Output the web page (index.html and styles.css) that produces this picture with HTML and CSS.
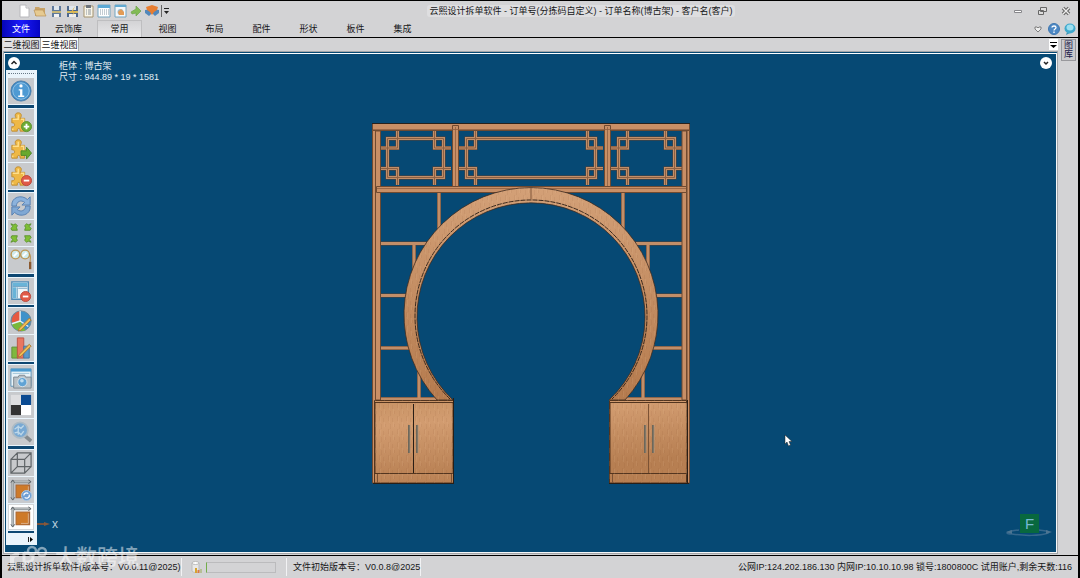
FILE: index.html
```html
<!DOCTYPE html>
<html lang="zh-CN">
<head>
<meta charset="utf-8">
<title>云熙设计拆单软件</title>
<link rel="stylesheet" href="styles.css">
</head>
<body>
<div class="app">
  <header class="header">
    <div class="titlebar">
      <div class="quick">
        <button aria-label="新建"><svg viewBox="0 0 14 14"><path d="M3 1h6l3 3v9H3z" fill="#fff" stroke="#b8b8bc"/><path d="M9 1v3h3" fill="#eee" stroke="#b8b8bc"/></svg></button>
        <button aria-label="打开"><svg viewBox="0 0 14 14"><path d="M2 3h4l1 1h5v8H2z" fill="#c9a367"/><path d="M1 6h9l3 6H3z" fill="#e6ca91" stroke="#b99459" stroke-width=".7"/></svg></button>
        <button aria-label="保存"><svg viewBox="0 0 14 14"><path d="M3 2h9v11H3z" fill="#607b9d"/><path d="M5 2h5v4H5z" fill="#dfe6ec"/><path d="M3 7h9v2H3z" fill="#c7b779"/><path d="M5 10h5v3H5z" fill="#f3f3f3"/></svg></button>
        <button aria-label="另存为"><svg viewBox="0 0 14 14"><path d="M2 2h11v11H2z" fill="#4d688d"/><path d="M4 2h7v4H4z" fill="#dfe6ec"/><path d="M2 7h11v2H2z" fill="#d3bc62"/><path d="M4 10h7v3H4z" fill="#eee"/><path d="M10 2L6 8h3l-2 4 4-5H8z" fill="#e4b64a"/></svg></button>
        <button aria-label="清单"><svg viewBox="0 0 14 14"><path d="M3 2h9v11H3z" fill="#f8f5e9" stroke="#a5936f"/><path d="M5 1h5v3H5z" fill="#6d747c"/><path d="M5 6h1m1 0h3M5 8h1m1 0h3M5 10h1m1 0h3" stroke="#8b949c"/></svg></button>
        <button aria-label="表格"><svg viewBox="0 0 14 14"><path d="M1 1h12v12H1z" fill="#fff" stroke="#75a4bf"/><path d="M1 1h12v3H1z" fill="#5ca9d5"/><path d="M3 6h9M3 8h9M3 10h9" stroke="#879aa8" stroke-dasharray="1 1"/></svg></button>
        <button aria-label="视图设置"><svg viewBox="0 0 14 14"><path d="M2 1h11v12H2z" fill="#f5f8fa" stroke="#75a4bf"/><path d="M2 1h11v2H2z" fill="#62aad2"/><circle cx="7.500" cy="8" r="3" fill="#9db9cb"/><path d="M5 8l3-3 3 3v3H6z" fill="#e39b55"/></svg></button>
        <button aria-label="转到"><svg viewBox="0 0 14 14"><path d="M2 8l5-3V2l5 5-5 5V9l-4 1z" fill="#82bb55" stroke="#6ca348" stroke-width=".7"/></svg></button>
        <button aria-label="导入模型"><svg viewBox="0 0 14 14"><path d="M0 6l7-1 7 1v3l-4 3-3-3-3 3-4-3z" fill="#5288bb"/><path d="M1 3l6-2 6 2-1 3-3 2-2 3-2-3-3-2z" fill="#e77d31"/></svg></button>
        <button class="more" aria-label="更多"><svg viewBox="0 0 8 14"><path d="M0.500 1v12" stroke="#666"/><path d="M3 4.500h5" stroke="#222"/><path d="M3 7h5L5.500 10z" fill="#222"/></svg></button>
      </div>
      <h1 class="title">云熙设计拆单软件 - 订单号(分拣码自定义) - 订单名称(博古架) - 客户名(客户)</h1>
      <div class="window-controls">
        <button aria-label="最小化"><svg viewBox="0 0 10 10"><path d="M1.500 4.500h7v2h-7z" fill="#fff" stroke="#87878b"/></svg></button>
        <button aria-label="还原"><svg viewBox="0 0 10 10"><path d="M3.500 1.500h6v4h-6zM1.500 4.500h5v4h-5z" fill="#ddd" stroke="#666"/></svg></button>
        <button aria-label="关闭"><svg viewBox="0 0 10 10"><path d="M2 2l6 6M8 2l-6 6" stroke="#666" stroke-width="3.500"/><path d="M2 2l6 6M8 2l-6 6" stroke="#eee" stroke-width="1.300"/></svg></button>
      </div>
    </div>
    <nav class="ribbon">
      <button class="file">文件</button>
      <button class="wide">云饰库</button>
      <button class="active">常用</button>
      <button>视图</button>
      <button>布局</button>
      <button>配件</button>
      <button>形状</button>
      <button>板件</button>
      <button>集成</button>
      <div class="help">
        <button aria-label="折叠功能区"><svg viewBox="0 0 12 12"><path d="M3 4h2l1 1 1-1h2v2L6 9 3 6z" fill="#eee" stroke="#666" stroke-width=".8"/></svg></button>
        <button aria-label="帮助"><svg viewBox="0 0 12 12"><circle cx="6" cy="6" r="5.500" fill="#4d88c4" stroke="#3f77b0"/><path d="M4 4.500C4 2.500 8 2.500 8 4.500 8 6 6 6 6 7.500M6 8.500V10" fill="none" stroke="#fff" stroke-width="1.300"/></svg></button>
        <button aria-label="在线客服"><svg viewBox="0 0 12 12"><path d="M3 9l-1 3 4-2z" fill="#3c93b4"/><ellipse cx="6" cy="5.500" rx="5.500" ry="5" fill="#3fa9cd"/><ellipse cx="6" cy="4.500" rx="3.500" ry="3" fill="#9ddff0"/></svg></button>
      </div>
    </nav>
  </header>

  <main class="workspace">
    <section class="document">
      <div class="doc-tabs">
        <button>二维视图</button>
        <button class="selected">三维视图</button>
        <button class="tab-menu" aria-label="视图列表"><svg viewBox="0 0 9 10"><path d="M1 2h7v1H1zM1 5h7L4.500 8z"/></svg></button>
      </div>
      <div class="viewport">
        <button class="round round-left" aria-label="收起"><svg viewBox="0 0 12 12"><circle cx="6" cy="6" r="6" fill="#fff"/><path d="M3.500 7L6 4.500 8.500 7" fill="none" stroke="#222" stroke-width="1.500"/></svg></button>
        <button class="round round-right" aria-label="展开"><svg viewBox="0 0 12 12"><circle cx="6" cy="6" r="6" fill="#fff"/><path d="M4 5l2 2 2-2" fill="none" stroke="#222" stroke-width="1.500"/></svg></button>

        <svg class="defs" aria-hidden="true">
          <symbol id="puzzle" viewBox="0 0 24 24"><path d="M2 8h5c-2-2-2-6 2-6s4 4 2 6h5v5c4-2 5 0 5 2s-2 4-5 2v5h-5c1-4-4-4-3 0H2v-5c4 1 4-5 0-4z" fill="#eeb846" stroke="#bd8a2e"/><path d="M3 9h6V4M12 9h3v6M3 19v2" stroke="#ffdf8b" stroke-width="1.500" fill="none"/></symbol>
          <symbol id="frame" viewBox="0 0 24 24"><path d="M3 22V3h19" fill="none" stroke="#8d9295" stroke-width="3"/><path d="M3 22V3h19" fill="none" stroke="#c4c9cb"/><path d="M1 4l2-3 2 3M20 1l3 2-3 2M1 20l2 3 2-3" fill="none" stroke="#555c60"/><path d="M6 6h16v15H6z" fill="#a5663a"/><path d="M7 7h13v13H7z" fill="#ce7a29"/><path d="M20 8v11H12" fill="none" stroke="#deb48c"/></symbol>
        </svg>

        <div class="toolbar" role="toolbar" aria-label="视图工具">
          <div class="grip"></div>
          <button aria-label="信息"><svg viewBox="0 0 24 24"><circle cx="12" cy="12" r="11" fill="#3987c5" stroke="#4d7ea8"/><circle cx="12" cy="12" r="9" fill="#4e9ad3" stroke="#9cc8e7"/><circle cx="12" cy="6.500" r="1.800" fill="#fff"/><path d="M9.500 10h4v7h2v1.500H9V17h2v-5.500H9.500z" fill="#fff"/></svg></button>
          <hr class="thick">
          <button aria-label="添加组件"><svg viewBox="0 0 24 24"><use href="#puzzle"/><circle cx="18" cy="17" r="5.500" fill="#6cab32" stroke="#5d9330"/><path d="M18 14v6m-3-3h6" stroke="#fff" stroke-width="2"/></svg></button>
          <button aria-label="导出组件"><svg viewBox="0 0 24 24"><use href="#puzzle"/><path d="M12 14h6v-4l5.500 6.500L18 23v-4h-6z" fill="#68a92d" stroke="#4f872a"/></svg></button>
          <button aria-label="删除组件"><svg viewBox="0 0 24 24"><use href="#puzzle"/><circle cx="18" cy="17" r="5.500" fill="#e05a48" stroke="#b9463a"/><path d="M15 17h6" stroke="#fff" stroke-width="2"/></svg></button>
          <hr>
          <button aria-label="刷新"><svg viewBox="0 0 24 24"><path d="M2 12C1 2 13-1 19 5l3-3v9h-9l3-3C12 5 7 7 7 12z" fill="#8bb2dc" stroke="#557fb0"/><path d="M22 12c1 10-11 13-17 7l-3 3v-9h9l-3 3c4 3 9 1 9-4z" fill="#7fa8d4" stroke="#557fb0"/></svg></button>
          <button aria-label="缩放至全部"><svg viewBox="0 0 24 24"><path id="corner" d="M1 2l3 1 2-1 2 2-1 2 1 3H2L1 7l2-2z" fill="#80bf36" stroke="#5b932e"/><use href="#corner" transform="matrix(-1 0 0 1 24 0)"/><use href="#corner" transform="matrix(1 0 0 -1 0 24)"/><use href="#corner" transform="matrix(-1 0 0 -1 24 24)"/></svg></button>
          <button aria-label="查看"><svg viewBox="0 0 24 24"><circle cx="6" cy="6" r="4.800" fill="#cfebed" stroke="#bb9653" stroke-width="1.500"/><circle cx="16.500" cy="6" r="4.800" fill="#cfebed" stroke="#bb9653" stroke-width="1.500"/><path d="M21 5c2 2 1 5 1 9" fill="none" stroke="#b78739"/><path d="M22 14v8" stroke="#8b5930" stroke-width="2.500"/><path d="M4 8l4-4m6 4l4-4" stroke="#fff" stroke-width="2"/></svg></button>
          <hr class="thick">
          <button aria-label="关闭视窗"><svg viewBox="0 0 24 24"><path d="M2 2h18v19H2z" fill="#edf6fa" stroke="#4f8bb5" stroke-width="1.500"/><path d="M3 3h16v4H3zM3 8h4v12H3z" fill="#69b4d8"/><path d="M3 7h16M8 8v12M9 9h10" stroke="#6fa0bf"/><circle cx="17" cy="18" r="5.500" fill="#e05a48" stroke="#b9463a"/><path d="M14 18h6" stroke="#fff" stroke-width="2"/></svg></button>
          <hr>
          <button aria-label="颜色"><svg viewBox="0 0 24 24"><circle cx="12" cy="12" r="11" fill="#3e92ca" stroke="#698698"/><path d="M11 12V1A11 11 0 0 0 2 14z" fill="#e65a42"/><path d="M11 12L2 15a11 11 0 0 0 15 7z" fill="#79b83b"/><path d="M11 1v11l9 6m-9-6L2 15" fill="none" stroke="#e9f2f4" stroke-width="1.500"/><path d="M21 9l2 2L12 22l-3 1 1-3z" fill="#efbd55" stroke="#a97632"/></svg></button>
          <button aria-label="统计"><svg viewBox="0 0 24 24"><path d="M2 11h7v12H2z" fill="#7fb83e" stroke="#5e9038"/><path d="M8 1h7v22H8z" fill="#e87660" stroke="#bc5142"/><path d="M15 10h6v13h-6z" fill="#5b99cb" stroke="#3f75a1"/><path d="M21 8l2 2-11 11-3 1 1-3z" fill="#efbd55" stroke="#a97632"/></svg></button>
          <hr>
          <button aria-label="截图"><svg viewBox="0 0 24 24"><path d="M1 2h22v19H1z" fill="#e8f3f8" stroke="#5b93b8"/><path d="M1 2h22v3H1z" fill="#4b9bd0"/><path d="M3 7h18" stroke="#9dc4d8"/><path d="M4 11h5l1-2h6l1 2h6v12H4z" fill="#b8c0c5" stroke="#7b868d"/><circle cx="13.500" cy="16.500" r="5" fill="#60a3d5" stroke="#d9e4ea"/><circle cx="13" cy="15" r="2" fill="#bcdcf0"/></svg></button>
          <button aria-label="显示模式"><svg viewBox="0 0 24 24"><path d="M1 1h11v11H1z" fill="#dedee0"/><path d="M12 1h11v11H12z" fill="#0b4b92"/><path d="M1 12h11v11H1z" fill="#333"/><path d="M12 12h11v11H12z" fill="#fff"/></svg></button>
          <button aria-label="放大镜"><svg viewBox="0 0 24 24"><path d="M15 15l8 7" stroke="#858b8f" stroke-width="4"/><circle cx="11" cy="10" r="8.500" fill="#79a9d3" stroke="#adbbc5" stroke-width="2"/><path d="M5 9l4-3 3 2 3-3M5 13l4-1 3 3 3-4M9 5v10" fill="none" stroke="#bdd7e9" stroke-width="1.500"/></svg></button>
          <hr class="thick">
          <button aria-label="线框"><svg viewBox="0 0 24 24"><path d="M1 8h15v15H1zM8 1h15v15H8zM1 8l7-7m8 7l7-7m-7 22l7-7M1 23l7-7" fill="none" stroke="#5f6467" stroke-width="1.300"/></svg></button>
          <button aria-label="尺寸刷新"><svg viewBox="0 0 24 24"><use href="#frame"/><circle cx="18" cy="18" r="5.500" fill="#6f9fd4" stroke="#a7c5e1"/><path d="M15 18a3 3 0 0 1 5-2m1 1a3 3 0 0 1-5 3" fill="none" stroke="#fff" stroke-width="1.300"/></svg></button>
          <button class="checked" aria-label="尺寸标注"><svg viewBox="0 0 24 24"><use href="#frame"/></svg></button>
          <hr>
          <button class="overflow" aria-label="更多工具"><svg viewBox="0 0 8 8"><path d="M2.500 2v5" stroke="#222"/><path d="M4 2l3 2.500L4 7z"/></svg></button>
        </div>

        <div class="info"><p>柜体 : 博古架</p><p>尺寸 : 944.89 * 19 * 1581</p></div>

        <svg class="model" viewBox="371 122 320 362" role="img" aria-label="博古架三维模型">
          <defs>
            <linearGradient id="door" x1="0" y1="0" x2=".4" y2="1"><stop offset="0" stop-color="#c99466"/><stop offset=".3" stop-color="#d29c70"/><stop offset="1" stop-color="#b77f52"/></linearGradient>
            <linearGradient id="ring" gradientUnits="userSpaceOnUse" x1="0" y1="188" x2="0" y2="400"><stop offset="0" stop-color="#d3a077"/><stop offset="1" stop-color="#b57b4e"/></linearGradient>
            <pattern id="grain" width="9" height="13" patternUnits="userSpaceOnUse"><path d="M1.500 0v5m2 3v5m2-11v4m2 2v3" stroke="#714020" stroke-opacity=".07"/><path d="M2.500 1v6m4-1v5" stroke="#f5cda6" stroke-opacity=".1"/></pattern>
            <g id="lattice">
              <path d="M387.500 138.500h56v39h-56zM397.500 131v17H380m0 20.500h17.500V185M434.500 131v17H451m0 20.500h-16.500V185"/>
              <path d="M466.500 138.500h129v39h-129zM475.500 131v17H459m0 20.500h16.500V185M587.500 131v17H603m0 20.500h-15.500V185"/>
              <path d="M618.500 138.500h56v39h-56zM627.500 131v17H611m0 20.500h16.500V185M665.500 131v17H682m0 20.500h-16.500V185"/>
            </g>
            <g id="shelves"><path d="M439 193v42M377 243.500h53M414 245v35M377 295.500h33M377 348h35M419 370v30M376 399h62"/></g>
          </defs>
          <use href="#lattice" class="edge"/><use href="#lattice" class="rail"/><use href="#lattice" class="seam"/>
          <use href="#shelves" class="edge"/><use href="#shelves" class="rail"/>
          <use href="#shelves" class="edge" transform="matrix(-1 0 0 1 1062 0)"/><use href="#shelves" class="rail" transform="matrix(-1 0 0 1 1062 0)"/>
          <g class="wood">
            <path d="M372.500 123.500h3V483h-3zM686.500 123.500h3V483h-3zM375.500 131h5v269h-5zM682 131h5v269h-5z"/>
            <path d="M372.500 123.500h317v7h-317zM376.500 186.500h310v6h-310z"/>
            <path d="M452.500 125.500h6v61h-6zM604.500 125.500h6v61h-6z"/>
          </g>
          <path d="M373 129.500h316M455.500 127v59M607.500 127v59M377 188.500h309" stroke="#8f6040" stroke-width=".8"/>
          <path d="M372 123.500h318" stroke="#28211c"/>
          <path d="M437 400A127 127 0 1 1 625 400L609 400A114 114 0 1 0 453 400z" fill="url(#ring)" stroke="#3d2b1f" stroke-width=".8"/>
          <path d="M437 400A127 127 0 1 1 625 400L609 400A114 114 0 1 0 453 400z" fill="url(#grain)"/>
          <path d="M450 399A116 116 0 1 1 612 399" fill="none" stroke="#3b291d" stroke-dasharray="5 1"/>
          <path d="M531 188v11" stroke="#80573a"/>
          <g class="cabinet">
            <path d="M374.500 400.500h79v82.500h-79zM609.500 400.500h77v82.500h-77z"/>
            <path d="M375 402.500h78v71h-78zM610 402.500h77v71h-77z"/>
          </g>
          <path d="M374 400h79v83h-79zM609 400h78v83h-78z" fill="url(#grain)"/>
          <path d="M413.500 404v69M453.500 398v85M687.500 400v83M373 483.500h81M609 483.500h80" stroke="#291e16"/>
          <path d="M648.500 404v69M377.500 474v9M451.500 474v9M612.500 474v9" stroke="#7b5234"/>
          <path d="M409 425v28M417 425v28M645 425v28M653 425v28" stroke="#6d675a" stroke-width="2"/>
          <path d="M410 425v28M418 425v28M646 425v28M654 425v28" stroke="#a69782" stroke-width=".7"/>
        </svg>

        <div class="axis"><svg viewBox="0 0 14 12"><path d="M0 6h8" stroke="#78513b" stroke-width="2"/><path d="M7 4l6 2-6 2z" fill="#86583b"/></svg><span>x</span></div>
        <svg class="compass" viewBox="0 0 48 26"><path d="M14 17C2 18-2 21 7 21c12 2 28 2 36-1 2-2-2-2-9-3" fill="none" stroke="#35678c" stroke-width="1.500"/><path d="M1 19l6-2v4zM47 19l-6-2v4z" fill="#4c7592"/><path d="M15 1h19v19H15z" fill="#08683f"/><text x="20" y="16">F</text></svg>
        <svg class="pointer" viewBox="0 0 8 12"><path d="M1 0v9l2-2 1.500 4 2-1L5 6.500h3z" fill="#fff" stroke="#222" stroke-width=".5"/></svg>
      </div>
    </section>
    <aside class="side"><button>图库</button></aside>
  </main>

  <footer class="status">
    <span class="version">云熙设计拆单软件(版本号：V0.0.11@2025)</span>
    <div class="progress-cell">
      <svg viewBox="0 0 12 14"><path d="M2 3v8c1 2 7 2 7 0V3" fill="#e8e8e8" stroke="#bbb"/><ellipse cx="5.500" cy="3" rx="3.500" ry="1.500" fill="#fff" stroke="#bbb"/><path d="M6 8v5" stroke="#d7a32e" stroke-width="2"/><path d="M8.500 10v3" stroke="#d97943" stroke-width="2"/><path d="M11 9v4" stroke="#99aa55"/></svg>
      <div class="progress" role="progressbar" aria-label="进度" aria-valuenow="1"></div>
    </div>
    <span class="file-version">文件初始版本号：V0.0.8@2025</span>
    <span class="account">公网IP:124.202.186.130 内网IP:10.10.10.98 锁号:1800800C 试用账户,剩余天数:116</span>
  </footer>

  <div class="watermark" aria-hidden="true">
    <svg viewBox="0 0 40 24"><path d="M3 22V10m0 5c0-4 3-6 7-5" fill="none" stroke="#fff" stroke-width="4"/><path d="M15 23V7m0 1h3c8 0 8 9 0 9h-3" fill="none" stroke="#fff" stroke-width="3"/><circle cx="23" cy="6" r="4" fill="none" stroke="#fff" stroke-width="2.500"/><circle cx="33" cy="7" r="4" fill="none" stroke="#fff" stroke-width="2.500"/></svg>
    <span>大数跨境</span>
  </div>
</div>
</body>
</html>
```
FILE: styles.css
```css
* { box-sizing: border-box; }
body {
  margin: 0;
  background: #d3d3d5;
  color: #161618;
  font: 9px/12px "Liberation Sans", "Noto Sans CJK SC", sans-serif;
}
button {
  margin: 0;
  padding: 0;
  border: 0;
  background: none;
  color: inherit;
  font: inherit;
}
h1, p { margin: 0; }
svg { display: block; }
.app {
  position: relative;
  display: flex;
  flex-direction: column;
  min-height: 100vh;
  border: solid #000;
  border-width: 1px 2px 0;
}

/* Title bar and ribbon */
.header { border-bottom: 1px solid #000; }
.titlebar {
  display: grid;
  grid-template-columns: 172px 1fr 90px;
  align-items: center;
  height: 19px;
}
.quick { display: flex; gap: 2px; padding-left: 15px; }
.quick svg { width: 14px; height: 14px; }
.quick .more svg { width: 8px; overflow: visible; }
.title {
  justify-self: center;
  padding: 0 3px;
  border-radius: 3px;
  background: #dedee0;
  font-size: 9px;
  font-weight: 400;
  white-space: nowrap;
}
.window-controls { display: flex; justify-content: flex-end; gap: 14px; padding-right: 7px; }
.window-controls svg { width: 10px; height: 10px; }
.ribbon { display: flex; height: 17px; }
.ribbon > button { width: 47px; }
.ribbon > .file { width: 38px; color: #fff; background: linear-gradient(90deg, #0606b8, #1b1bfa 50%, #0606c4); }
.ribbon > .wide { width: 57px; }
.ribbon > .active { width: 45px; margin-right: 2px; border: 1px solid #bebec0; border-bottom: 0; background: linear-gradient(#d3d3d5, #e8e8ea); }
.help { display: flex; align-items: center; gap: 4px; margin-left: auto; padding-right: 2px; }
.help svg { width: 12px; height: 12px; }

/* Document area */
.workspace { display: flex; flex: 1; padding-bottom: 1px; border-bottom: 1px solid #000; }
.document { display: flex; flex: 1; flex-direction: column; }
.doc-tabs { display: flex; height: 13px; padding-left: 1px; }
.doc-tabs button { width: 38px; border-right: 1px solid #aaa; background: #e0e0e2; white-space: nowrap; }
.doc-tabs .selected { background: #fff; }
.doc-tabs .tab-menu { display: grid; place-items: center; width: 9px; margin: 1px 0 1px auto; border: 0; background: #fff; }
.tab-menu svg { width: 9px; height: 10px; }
.viewport {
  position: relative;
  display: flex;
  flex: 1;
  align-items: center;
  justify-content: center;
  margin-left: 1px;
  border: 2px solid #f5f7f8;
  border-top: 3px double #fff;
  background: #064974;
  outline: 1px solid #a3a5a8;
  outline-offset: -1px;
}
.defs { position: absolute; width: 0; height: 0; }
.round { position: absolute; top: 3px; }
.round svg { width: 12px; height: 12px; }
.round-left { left: 3px; }
.round-right { right: 4px; }
.info { position: absolute; left: 54px; top: 7px; color: #e3edf3; line-height: 11px; }

.toolbar {
  position: absolute;
  left: 1px;
  top: 16px;
  display: flex;
  flex-direction: column;
  gap: 1px;
  width: 31px;
  padding: 3px 3px 2px 2px;
  background: #eaf4fb;
}
.grip { height: 4px; border-top: 1px dotted #687986; }
.toolbar button {
  display: grid;
  place-items: center;
  height: 26px;
  background: #c8cacd;
}
.toolbar svg { width: 22px; height: 22px; }
.toolbar .checked { border: 1px solid #d3d5d7; background: #fff; }
.toolbar hr { width: 100%; height: 2px; margin: 0; border: 0; background: #0d4772; }
.toolbar hr.thick { height: 3px; }
.toolbar .overflow { justify-items: end; height: 9px; background: none; }
.toolbar .overflow svg { width: 8px; height: 8px; }

.model { width: 320px; height: 362px; }
.edge { fill: none; stroke: #5c412f; stroke-width: 4; }
.rail { fill: none; stroke: #c28e68; stroke-width: 3; }
.seam { fill: none; stroke: #8e6143; stroke-width: 1; }
.wood { fill: #c88f66; stroke: #704a30; stroke-width: 1; }
.cabinet { fill: url(#door); stroke: #53351f; stroke-width: 1; }
.axis { position: absolute; left: 32px; bottom: 22px; display: flex; gap: 1px; color: #b9cfdf; font-size: 12px; }
.axis svg { width: 14px; height: 12px; }
.compass { position: absolute; right: 3px; bottom: 13px; width: 48px; height: 26px; fill: #77b9d4; font-size: 15px; }
.pointer { position: absolute; left: 779px; top: 381px; width: 8px; height: 12px; }

.side { width: 20px; padding: 1px 2px 0 3px; }
.side button {
  width: 15px;
  height: 22px;
  border: 1px solid #98989c;
  background: #c9c9cc;
  color: #20204a;
  line-height: 9px;
}

/* Status bar */
.status { display: flex; align-items: center; height: 22px; white-space: nowrap; }
.status > * { display: flex; align-items: center; height: 18px; }
.version { width: 180px; padding-left: 5px; border-right: 1px solid #f2f2f4; }
.progress-cell { gap: 4px; width: 105px; padding-left: 8px; border-right: 1px solid #f2f2f4; }
.progress-cell svg { width: 12px; height: 14px; }
.progress { width: 70px; height: 11px; border: 1px solid #bbbbbd; border-left: 1px solid #72ad4a; }
.file-version { width: 134px; padding-left: 6px; border-right: 1px solid #f2f2f4; }
.account { margin-left: auto; padding-right: 6px; }

.watermark {
  position: absolute;
  left: 7px;
  bottom: 9px;
  display: flex;
  align-items: center;
  gap: 6px;
  color: #fff;
  font-size: 21px;
  font-weight: 500;
  line-height: 24px;
  opacity: .5;
  pointer-events: none;
}
.watermark svg { width: 40px; height: 24px; }
```
